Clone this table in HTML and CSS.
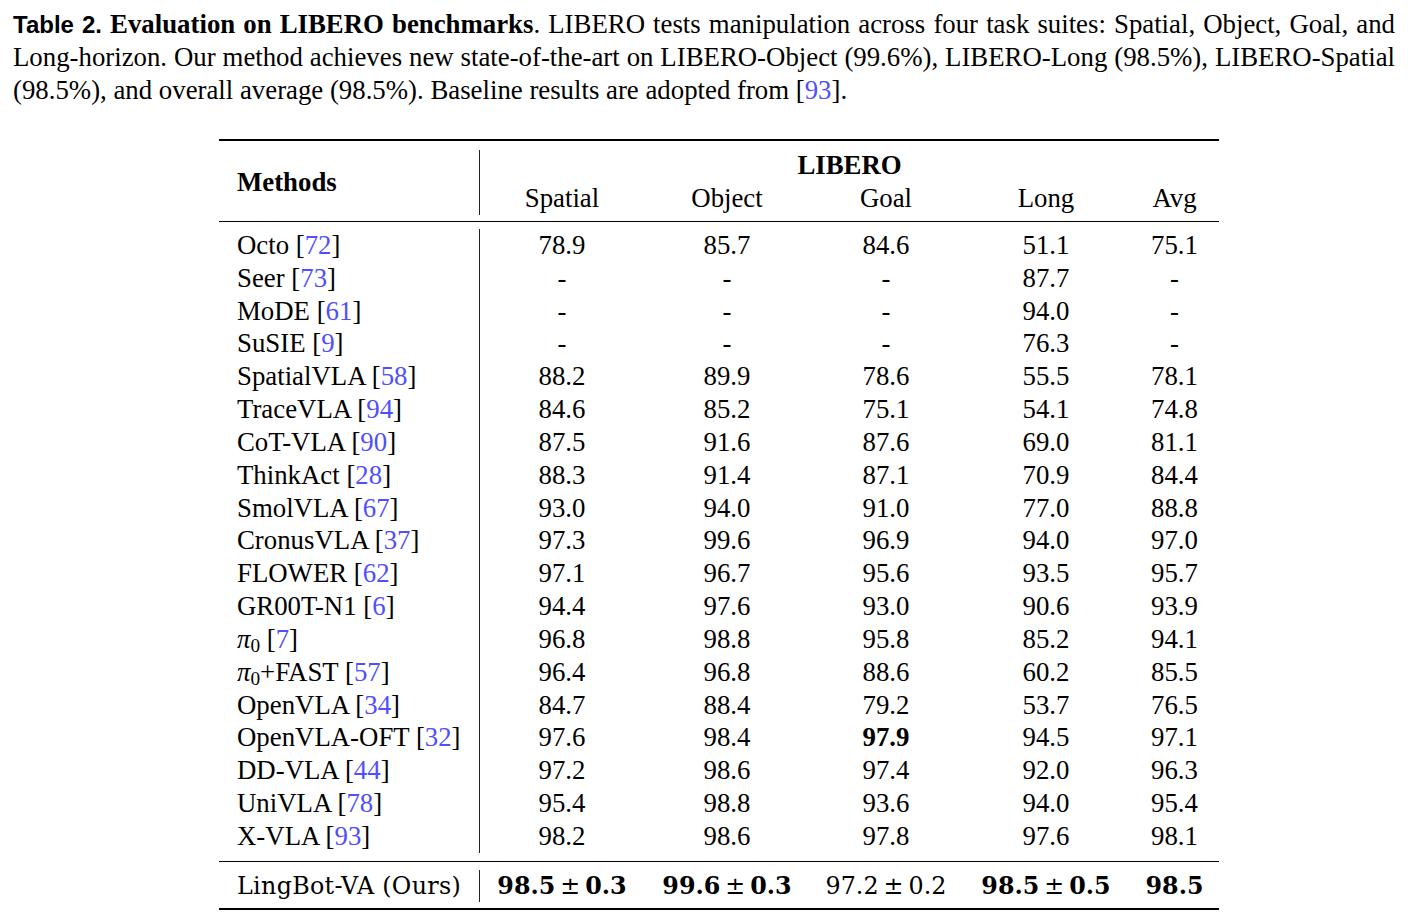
FILE: index.html
```html
<!DOCTYPE html>
<html lang="en">
<head>
    <meta charset="UTF-8">
    <meta name="viewport" content="width=device-width, initial-scale=1.0">
    <title>Table 2 - Evaluation on LIBERO benchmarks</title>
    <link rel="stylesheet" href="styles.css">
</head>
<body>
    <div class="page">
        <p class="caption">
            <span class="line"><span class="tag">Table 2.</span> <b>Evaluation on LIBERO benchmarks</b>. LIBERO tests manipulation across four task suites: Spatial, Object, Goal, and</span>
            <span class="line">Long-horizon. Our method achieves new state-of-the-art on LIBERO-Object (99.6%), LIBERO-Long (98.5%), LIBERO-Spatial</span>
            <span class="line last">(98.5%), and overall average (98.5%). Baseline results are adopted from [<a href="#">93</a>].</span>
        </p>

        <div class="results">
            <!-- Naglowek -->
            <div class="section head grid">
                <div class="method methods-title">Methods</div>
                <div class="group">LIBERO</div>
                <div class="sub">Spatial</div>
                <div class="sub">Object</div>
                <div class="sub">Goal</div>
                <div class="sub">Long</div>
                <div class="sub">Avg</div>
            </div>

            <!-- Wyniki bazowe -->
            <div class="section body grid">
                <div class="method">Octo [<a href="#">72</a>]</div><div>78.9</div><div>85.7</div><div>84.6</div><div>51.1</div><div>75.1</div>
                <div class="method">Seer [<a href="#">73</a>]</div><div>-</div><div>-</div><div>-</div><div>87.7</div><div>-</div>
                <div class="method">MoDE [<a href="#">61</a>]</div><div>-</div><div>-</div><div>-</div><div>94.0</div><div>-</div>
                <div class="method">SuSIE [<a href="#">9</a>]</div><div>-</div><div>-</div><div>-</div><div>76.3</div><div>-</div>
                <div class="method">SpatialVLA [<a href="#">58</a>]</div><div>88.2</div><div>89.9</div><div>78.6</div><div>55.5</div><div>78.1</div>
                <div class="method">TraceVLA [<a href="#">94</a>]</div><div>84.6</div><div>85.2</div><div>75.1</div><div>54.1</div><div>74.8</div>
                <div class="method">CoT-VLA [<a href="#">90</a>]</div><div>87.5</div><div>91.6</div><div>87.6</div><div>69.0</div><div>81.1</div>
                <div class="method">ThinkAct [<a href="#">28</a>]</div><div>88.3</div><div>91.4</div><div>87.1</div><div>70.9</div><div>84.4</div>
                <div class="method">SmolVLA [<a href="#">67</a>]</div><div>93.0</div><div>94.0</div><div>91.0</div><div>77.0</div><div>88.8</div>
                <div class="method">CronusVLA [<a href="#">37</a>]</div><div>97.3</div><div>99.6</div><div>96.9</div><div>94.0</div><div>97.0</div>
                <div class="method">FLOWER [<a href="#">62</a>]</div><div>97.1</div><div>96.7</div><div>95.6</div><div>93.5</div><div>95.7</div>
                <div class="method">GR00T-N1 [<a href="#">6</a>]</div><div>94.4</div><div>97.6</div><div>93.0</div><div>90.6</div><div>93.9</div>
                <div class="method"><i class="pi">π</i><sub>0</sub> [<a href="#">7</a>]</div><div>96.8</div><div>98.8</div><div>95.8</div><div>85.2</div><div>94.1</div>
                <div class="method"><i class="pi">π</i><sub>0</sub>+FAST [<a href="#">57</a>]</div><div>96.4</div><div>96.8</div><div>88.6</div><div>60.2</div><div>85.5</div>
                <div class="method">OpenVLA [<a href="#">34</a>]</div><div>84.7</div><div>88.4</div><div>79.2</div><div>53.7</div><div>76.5</div>
                <div class="method">OpenVLA-OFT [<a href="#">32</a>]</div><div>97.6</div><div>98.4</div><div><b>97.9</b></div><div>94.5</div><div>97.1</div>
                <div class="method">DD-VLA [<a href="#">44</a>]</div><div>97.2</div><div>98.6</div><div>97.4</div><div>92.0</div><div>96.3</div>
                <div class="method">UniVLA [<a href="#">78</a>]</div><div>95.4</div><div>98.8</div><div>93.6</div><div>94.0</div><div>95.4</div>
                <div class="method">X-VLA [<a href="#">93</a>]</div><div>98.2</div><div>98.6</div><div>97.8</div><div>97.6</div><div>98.1</div>
            </div>

            <!-- Nasza metoda -->
            <div class="section foot grid">
                <div class="method">LingBot-VA (Ours)</div>
                <div><b>98.5<span class="pm">±</span>0.3</b></div>
                <div><b>99.6<span class="pm">±</span>0.3</b></div>
                <div>97.2<span class="pm">±</span>0.2</div>
                <div><b>98.5<span class="pm">±</span>0.5</b></div>
                <div><b>98.5</b></div>
            </div>
        </div>
    </div>
</body>
</html>
```

FILE: styles.css
```css
* {
    margin: 0;
    padding: 0;
    box-sizing: border-box;
}

body {
    background-color: #fff;
    color: #000;
    font-family: 'Liberation Serif', 'Times New Roman', serif;
    font-size: 26.8px;
}

a {
    color: #4f4fff;
    text-decoration: none;
}

.page {
    padding: 8px 0 0 13px;
}

/* Podpis tabeli */
.caption {
    width: 1382px;
    line-height: 33px;
}

.caption .line {
    display: block;
    text-align: justify;
    text-align-last: justify;
}

.caption .line.last {
    text-align-last: left;
}

.caption .tag {
    font-family: 'Liberation Sans', Arial, sans-serif;
    font-weight: bold;
    font-size: 24px;
}

/* Tabela */
.results {
    width: 1000px;
    margin: 32px 0 0 206px;
    border-top: 2px solid #000;
    border-bottom: 2px solid #000;
}

.grid {
    display: grid;
    grid-template-columns: 261px 164px 166px 152px 168px 89px;
    text-align: center;
}

.method {
    text-align: left;
    padding-left: 18px;
    border-right: 1px solid #222;
    white-space: nowrap;
}

.head {
    padding: 9px 0 6px;
    grid-template-rows: 31px 34px;
    line-height: 31px;
}

.methods-title {
    grid-row: 1 / span 2;
    grid-column: 1;
    font-weight: bold;
    display: flex;
    align-items: center;
}

.group {
    grid-row: 1;
    grid-column: 2 / span 5;
    font-weight: bold;
}

.sub {
    grid-row: 2;
    line-height: 34px;
}

.body {
    border-top: 1px solid #000;
    padding: 7px 0 8px;
    grid-auto-rows: 32.83px;
    line-height: 32.83px;
}

.pi {
    font-style: italic;
}

sub {
    font-size: 0.72em;
    line-height: 0;
    vertical-align: -0.22em;
}

/* Wiersz z nasza metoda - inny krój jak w LaTeX */
.foot {
    border-top: 1px solid #000;
    padding: 8px 0 6px;
    grid-auto-rows: 32px;
    line-height: 32px;
    font-family: 'DejaVu Serif', serif;
    font-size: 23.8px;
}

.foot .method {
    letter-spacing: 0.3px;
}

.pm {
    padding: 0 5px;
    font-weight: normal;
}
```
